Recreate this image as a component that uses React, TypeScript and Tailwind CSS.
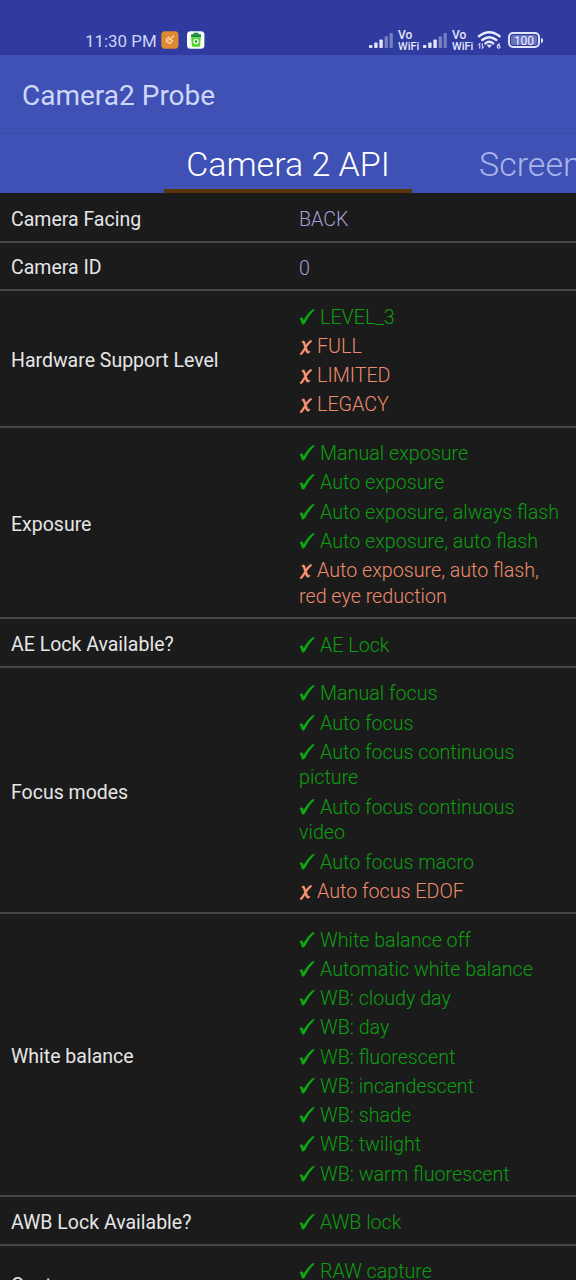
type Mark = "yes" | "no" | "plain";

type Item = { mark: Mark; text: string };

const yes = (text: string): Item => ({ mark: "yes", text });
const no = (text: string): Item => ({ mark: "no", text });
const plain = (text: string): Item => ({ mark: "plain", text });

const rows: { label: string; items: Item[] }[] = [
  { label: "Camera Facing", items: [plain("BACK")] },
  { label: "Camera ID", items: [plain("0")] },
  {
    label: "Hardware Support Level",
    items: [yes("LEVEL_3"), no("FULL"), no("LIMITED"), no("LEGACY")],
  },
  {
    label: "Exposure",
    items: [
      yes("Manual exposure"),
      yes("Auto exposure"),
      yes("Auto exposure, always flash"),
      yes("Auto exposure, auto flash"),
      no("Auto exposure, auto flash, red eye reduction"),
    ],
  },
  { label: "AE Lock Available?", items: [yes("AE Lock")] },
  {
    label: "Focus modes",
    items: [
      yes("Manual focus"),
      yes("Auto focus"),
      yes("Auto focus continuous picture"),
      yes("Auto focus continuous video"),
      yes("Auto focus macro"),
      no("Auto focus EDOF"),
    ],
  },
  {
    label: "White balance",
    items: [
      yes("White balance off"),
      yes("Automatic white balance"),
      yes("WB: cloudy day"),
      yes("WB: day"),
      yes("WB: fluorescent"),
      yes("WB: incandescent"),
      yes("WB: shade"),
      yes("WB: twilight"),
      yes("WB: warm fluorescent"),
    ],
  },
  { label: "AWB Lock Available?", items: [yes("AWB lock")] },
  { label: "Capture", items: [yes("RAW capture"), yes("Burst capture")] },
];

const colors: Record<Mark, string> = {
  yes: "text-[#0b9f0f]",
  no: "text-[#ee8c6d]",
  plain: "text-[#a79ed6]",
};

function Signal() {
  return (
    <svg width="24" height="17" viewBox="0 0 24 17" fill="#e3e6fa">
      <rect x="0" y="13" width="3.4" height="3" rx="0.8" />
      <rect x="5.2" y="10.5" width="3.4" height="5.5" rx="0.8" />
      <rect x="10.4" y="7.5" width="3.4" height="8.5" rx="0.8" />
      <rect x="15.6" y="4.3" width="3.4" height="11.7" rx="0.8" opacity="0.4" />
      <rect x="20.6" y="1" width="3.2" height="15" rx="0.8" opacity="0.4" />
    </svg>
  );
}

function VoWifi() {
  return (
    <div className="w-[22px] pt-[2px] text-[11px] font-medium leading-[11px] text-[#e3e6fa]">
      <div className="text-[12px]">Vo</div>
      <div>WiFi</div>
    </div>
  );
}

function StatusBar() {
  return (
    <div className="flex h-[55px] items-center bg-[#2f3b9e] pt-[25px] pl-[85px]">
      <span className="w-[76px] whitespace-nowrap pt-[2px] text-[16.9px] leading-[26px] text-[#cdd3f4]">11:30 PM</span>
      <svg className="block" width="18" height="18" viewBox="0 0 18 18">
        <rect x="0.3" y="0.3" width="17.2" height="17.4" rx="3.6" fill="#de8a35" />
        <g stroke="#ffe6b8" strokeWidth="1.1" fill="none" strokeLinejoin="round" strokeLinecap="round">
          <path d="M12.6 4.8 L10.6 7" />
          <path d="M7.6 6.2 L11.4 9.8 L9.2 12.2 Q6.2 12 5.2 8.6 Z" />
          <path d="M7.2 9.4 L8.6 8.2" />
        </g>
      </svg>
      <svg className="ml-[8px] block" width="18" height="18" viewBox="0 0 18 18">
        <rect x="0" y="0.2" width="17.4" height="17.6" rx="3.6" fill="#fbfff8" />
        <rect x="6.5" y="1.8" width="5" height="2" rx="0.6" fill="#1b8a42" />
        <rect x="4" y="3.2" width="10" height="3" rx="0.8" fill="#1b8a42" />
        <path d="M4.2 6.2h9.6l-.7 8.6a1 1 0 0 1-1 .9H5.9a1 1 0 0 1-1-.9z" fill="#52d629" />
        <circle cx="9" cy="10.5" r="2" fill="#258f35" stroke="#fff" strokeWidth="1.3" />
      </svg>
      <div className="ml-[164px] flex items-center">
        <Signal />
        <div className="ml-[5px]"><VoWifi /></div>
        <div className="ml-[3px]"><Signal /></div>
        <div className="ml-[5px]"><VoWifi /></div>
        <svg className="ml-[3px]" width="25" height="20" viewBox="0 0 25 20" fill="none" stroke="#e8ebff" strokeLinecap="round">
          <path d="M2 6.3 Q12.3 -1.8 22.6 6.3" strokeWidth="2.4" />
          <path d="M5.2 10 Q12.3 4.3 19.4 10" strokeWidth="2.4" />
          <path d="M8.4 13.4 Q12.3 10.3 16.2 13.4" strokeWidth="2.4" />
          <path d="M10.4 15.3 L12.3 17.6 L14.2 15.3 Z" fill="#e8ebff" strokeWidth="0.8" />
          <path d="M2.8 18.2v-4.5M1.5 15l1.3-1.4M5.4 13.7v4.5M6.7 16.8l-1.3 1.4" strokeWidth="1" />
          <path d="M22.6 13.7q-2.4.8-2.4 3a1.4 1.4 0 1 0 1.4-1.4q-.9 0-1.3.9" strokeWidth="1.1" />
        </svg>
        <div className="ml-[6px] flex items-center">
          <div className="flex h-[16px] w-[32px] items-center justify-center rounded-[5px] border-2 border-[#dfe3fb] p-[1px]">
            <div className="flex h-full w-full items-center justify-center rounded-[2px] bg-[#6771c0] pt-px text-[12px] leading-none text-[#eef0ff]">
              100
            </div>
          </div>
          <div className="ml-[1px] h-[5px] w-[2px] rounded-r bg-[#dfe3fb]" />
        </div>
      </div>
    </div>
  );
}

function Header() {
  return (
    <div className="bg-[#3f51b5]">
      <div className="flex h-[79px] items-center border-b border-[#3849a6] pt-[4px] pl-[22px]">
        <h1 className="text-[28px] text-[#cfd6f8]">Camera2 Probe</h1>
      </div>
      <div className="flex h-[59px] overflow-hidden whitespace-nowrap pl-[164px] text-[34px] font-light leading-[60px]">
        <div className="w-[248px] shrink-0 border-b-[4px] border-[#573509] text-center text-white">Camera 2 API</div>
        <div className="ml-[67px] shrink-0 text-[#a9b4ea]">Screen</div>
      </div>
    </div>
  );
}

function MarkIcon({ mark }: { mark: Mark }) {
  if (mark === "plain") return null;
  if (mark === "yes") {
    return (
      <svg className="mr-[5px] inline-block align-[-1px]" width="16" height="16" viewBox="0 0 16 16" fill="#0dab12" stroke="#0dab12" strokeWidth="0.3">
        <path d="M.6 9.7Q1.5 8.4 2.7 8.4Q3.8 8.5 4.4 11.5Q8.4 4.4 13.4.5H15.7Q9.5 6.4 5.8 14.2Q5.4 15.3 3.6 15.5Q2.9 15.4 2.5 13.2Q1.8 9.9.6 9.7Z" />
      </svg>
    );
  }
  return (
    <svg className="mr-[4px] inline-block align-[-2px]" width="14" height="15" viewBox="0 0 14 15" fill="#ff9673" stroke="#ff9673" strokeWidth="0.6">
      <path d="M3.1 1.4Q4.3.5 5.2 1.2Q5.8 1.9 6.7 5.2Q9.2 1.8 11 .7Q12.4.3 12.9 1.2Q9.8 3.8 7.5 7.3Q8.6 10.9 9.4 11.5Q10.1 11.7 10.9 11.1Q11.1 12.2 9.9 12.9Q8.2 13.6 7.4 12.3Q6.8 11.3 6.2 9.4Q4.2 12.9 3.1 14.2Q1.6 15 .9 13.9Q3.4 11.4 5.5 7.4Q4.7 3.9 4.2 2.9Q3.7 2.3 3 2.8Z" />
    </svg>
  );
}

export default function App() {
  return (
    <div className="h-[1280px] w-[576px] overflow-hidden bg-[#1b1b1b] font-[Roboto,sans-serif]">
      <StatusBar />
      <Header />
      <div className="pt-[0.9px]">
        {rows.map((row) => (
          <div key={row.label} className="flex items-center border-b-2 border-[#464646] pt-[9.7px] pb-[7.8px]">
            <div className="w-[299px] shrink-0 pt-[3px] pl-[11px] text-[19.5px] leading-[26px] text-[#e6e6e6]">
              {row.label}
            </div>
            <div className="w-[264px]">
              {row.items.map((item) => (
                <div key={item.text} className={`pt-[3.55px] text-[19.7px] font-light leading-[25.7px] ${colors[item.mark]}`}>
                  <MarkIcon mark={item.mark} />
                  {item.text}
                </div>
              ))}
            </div>
          </div>
        ))}
      </div>
    </div>
  );
}
